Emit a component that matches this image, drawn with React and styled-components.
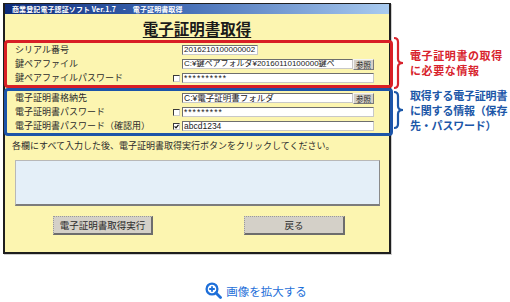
import React from "react";
import styled, { createGlobalStyle } from "styled-components";

const Global = createGlobalStyle`
  html, body { margin: 0; padding: 0; background: #ffffff; }
  body { width: 510px; height: 302px; overflow: hidden; font-family: "Noto Sans CJK JP", "Noto Sans", sans-serif; }
`;

const Page = styled.div`
  display: flex;
  flex-direction: column;
  width: 510px;
`;

const TopRow = styled.div`
  display: flex;
  align-items: flex-start;
  padding-top: 3px;
`;

const Window = styled.div`
  margin-left: 3px;
  width: 384px;
  background: #fcf5b0;
  border: 2px solid #1e1e1e;
  border-top-width: 1px;
  box-shadow: 1px 1px 0 #cfcfcf;
  display: flex;
  flex-direction: column;
  padding-bottom: 17px;
`;

const TitleBar = styled.div`
  height: 10px;
  background: linear-gradient(to right, #0c2a78 0%, #3a64b0 40%, #a9cbf0 100%);
  color: #ffffff;
  font-size: 7px;
  font-weight: 700;
  line-height: 10px;
  padding-left: 7px;
  white-space: nowrap;
  letter-spacing: 0.1px;
`;

const Heading = styled.div`
  height: 26px;
  display: flex;
  align-items: center;
  justify-content: center;
  font-size: 15.5px;
  font-weight: 700;
  color: #1a1a1a;
  text-decoration: underline;
  text-underline-offset: 2px;
  padding-top: 1px;
  box-sizing: border-box;
`;

const Group = styled.div`
  margin: 0 -4px 0 -1px;
  border: 3px solid ${(p) => p.$color};
  border-radius: 4px;
  padding: 0 16px 0 8px;
  display: flex;
  flex-direction: column;
`;

const Row = styled.div`
  height: 14px;
  display: grid;
  grid-template-columns: 158px 9px 192px;
  align-items: center;
`;

const Label = styled.span`
  font-size: 9px;
  color: #2b2b2b;
  white-space: nowrap;
  line-height: 14px;
`;

const CheckCell = styled.span`
  display: flex;
  align-items: center;
`;

const Check = styled.span`
  width: 5px;
  height: 5px;
  border: 1px solid #3a3a3a;
  border-right-color: #cfcfcf;
  border-bottom-color: #cfcfcf;
  background: #ffffff;
  display: flex;
  align-items: center;
  justify-content: center;
`;

const FieldWrap = styled.div`
  display: flex;
  align-items: center;
  height: 10px;
`;

const Field = styled.div`
  box-sizing: border-box;
  height: 10px;
  width: ${(p) => p.$w}px;
  background: #ffffff;
  border: 1px solid #6e6e6e;
  border-right-color: #c8c8c8;
  border-bottom-color: #c8c8c8;
  font-family: "Liberation Sans", "Noto Sans CJK JP", sans-serif;
  font-size: ${(p) => (p.$small ? "8px" : "8.5px")};
  line-height: 8px;
  padding-left: 1px;
  color: #1a1a1a;
  white-space: nowrap;
  overflow: hidden;
  letter-spacing: ${(p) => (p.$stars ? "1px" : "0")};
`;

const SmallButton = styled.div`
  box-sizing: border-box;
  width: 21px;
  height: 11px;
  background: #d4d0c8;
  border: 1px solid #f4f4f4;
  border-right-color: #7a7a7a;
  border-bottom-color: #7a7a7a;
  font-size: 7.5px;
  line-height: 9px;
  text-align: center;
  color: #222;
`;

const Instruction = styled.div`
  margin-top: 3px;
  padding-left: 7px;
  font-size: 9px;
  line-height: 13px;
  color: #2b2b2b;
  white-space: nowrap;
`;

const MessageBox = styled.div`
  margin: 8px 9px 0 10px;
  height: 46px;
  box-sizing: border-box;
  background: #e4eff8;
  border: 1px solid #b8b8b8;
  border-bottom: 2px solid #7c7c7c;
  border-right-color: #8a8a8a;
`;

const ButtonRow = styled.div`
  margin-top: 10px;
  display: flex;
  gap: 91px;
  padding-left: 48px;
`;

const Button = styled.div`
  box-sizing: border-box;
  width: ${(p) => p.$w}px;
  height: 19px;
  background: #d4d0c8;
  border: 1px dotted #9a9a9a;
  border-right: 2px solid #6d6d6d;
  border-bottom: 2px solid #6d6d6d;
  font-size: 9.5px;
  line-height: 16px;
  text-align: center;
  color: #2b2b2b;
`;

const Notes = styled.div`
  display: flex;
  flex-direction: column;
  padding-top: 33px;
  padding-left: 2px;
`;

const Note = styled.div`
  display: flex;
  align-items: center;
  height: ${(p) => p.$h}px;
  color: ${(p) => p.$color};
`;

const NoteText = styled.div`
  margin-left: 5px;
  font-size: 11px;
  font-weight: 700;
  line-height: 15px;
  letter-spacing: ${(p) => p.$ls || "0"};
  white-space: nowrap;
`;

const Footer = styled.div`
  margin-top: 28px;
  display: flex;
  justify-content: center;
  align-items: center;
  gap: 4px;
  padding-left: 2px;
  color: #1e6fd9;
  font-size: 11.5px;
  line-height: 16px;
`;

const Brace = ({ h, color }) => (
  <svg width="12" height={h} viewBox={`0 0 12 ${h}`}>
    <path
      d={`M1 2 Q5 2 5 6 L5 ${h / 2 - 4} Q5 ${h / 2} 10 ${h / 2} Q5 ${h / 2} 5 ${h / 2 + 4} L5 ${h - 6} Q5 ${h - 2} 1 ${h - 2}`}
      fill="none"
      stroke={color}
      strokeWidth="2.2"
    />
  </svg>
);

const CheckMark = () => (
  <svg width="5" height="5" viewBox="0 0 5 5">
    <path d="M0.6 2.4 L2 3.9 L4.5 0.8" fill="none" stroke="#111" strokeWidth="1.2" />
  </svg>
);

const ZoomIcon = () => (
  <svg width="17" height="17" viewBox="0 0 17 17">
    <circle cx="7" cy="7" r="5.4" fill="none" stroke="#1e6fd9" strokeWidth="2.3" />
    <path d="M7 4.2 V9.8 M4.2 7 H9.8" stroke="#1e6fd9" strokeWidth="1.8" />
    <path d="M11 11 L15.5 15.5" stroke="#1e6fd9" strokeWidth="2.8" strokeLinecap="round" />
  </svg>
);

const FormRow = ({ label, check, children }) => (
  <Row>
    <Label>{label}</Label>
    <CheckCell>
      {check !== undefined && <Check>{check && <CheckMark />}</Check>}
    </CheckCell>
    <FieldWrap>{children}</FieldWrap>
  </Row>
);

export default function App() {
  return (
    <>
      <Global />
      <Page>
        <TopRow>
          <Window>
            <TitleBar>商業登記電子認証ソフト Ver.1.7　-　電子証明書取得</TitleBar>
            <Heading>電子証明書取得</Heading>
            <Group $color="#d81e25">
              <FormRow label="シリアル番号">
                <Field $w={76} $small>2016210100000002</Field>
              </FormRow>
              <FormRow label="鍵ペアファイル">
                <Field $w={171} $small>C:¥鍵ペアフォルダ¥20160110100000鍵ペ</Field>
                <SmallButton>参照</SmallButton>
              </FormRow>
              <FormRow label="鍵ペアファイルパスワード" check={false}>
                <Field $w={192} $stars>**********</Field>
              </FormRow>
            </Group>
            <Group $color="#1c54a8">
              <FormRow label="電子証明書格納先">
                <Field $w={171}>C:¥電子証明書フォルダ</Field>
                <SmallButton>参照</SmallButton>
              </FormRow>
              <FormRow label="電子証明書パスワード" check={false}>
                <Field $w={192} $stars>*********</Field>
              </FormRow>
              <FormRow label="電子証明書パスワード（確認用）" check={true}>
                <Field $w={192}>abcd1234</Field>
              </FormRow>
            </Group>
            <Instruction>各欄にすべて入力した後、電子証明書取得実行ボタンをクリックしてください。</Instruction>
            <MessageBox />
            <ButtonRow>
              <Button $w={100}>電子証明書取得実行</Button>
              <Button $w={101}>戻る</Button>
            </ButtonRow>
          </Window>
          <Notes>
            <Note $h={54} $color="#d8232d">
              <Brace h={54} color="#d8232d" />
              <NoteText $ls="0.6px">
                電子証明書の取得
                <br />
                に必要な情報
              </NoteText>
            </Note>
            <Note $h={40} $color="#1c57a8">
              <Brace h={40} color="#1c57a8" />
              <NoteText $ls="-0.2px">
                取得する電子証明書
                <br />
                に関する情報（保存
                <br />
                先・パスワード）
              </NoteText>
            </Note>
          </Notes>
        </TopRow>
        <Footer>
          <ZoomIcon />
          <span>画像を拡大する</span>
        </Footer>
      </Page>
    </>
  );
}
